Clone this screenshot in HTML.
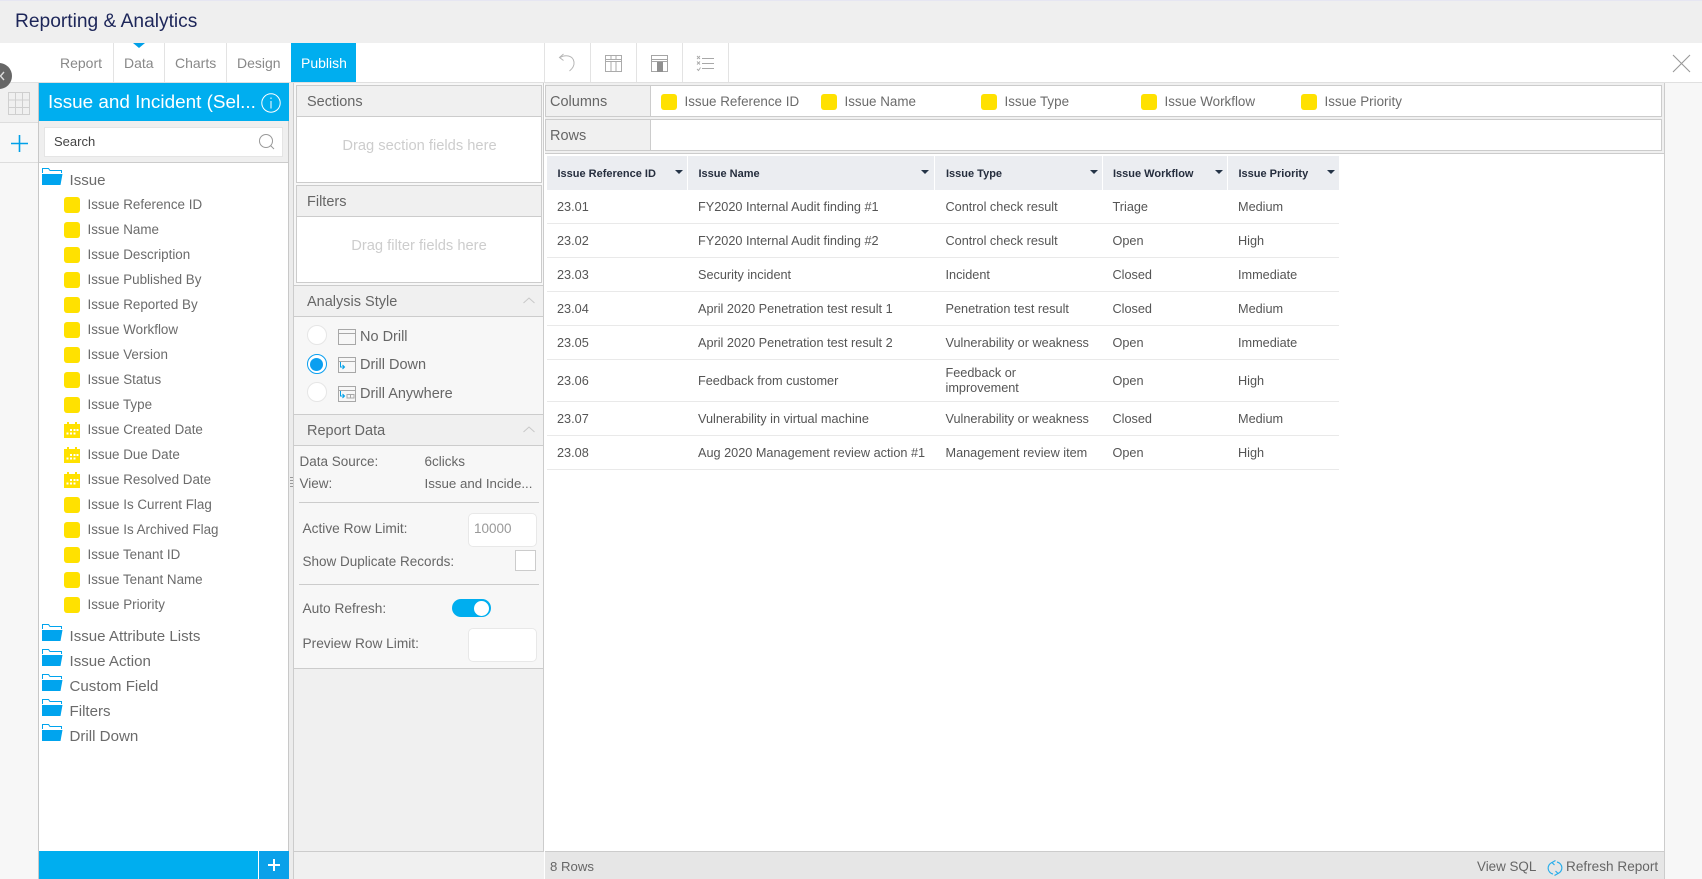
<!DOCTYPE html>
<html><head><meta charset="utf-8"><title>Reporting &amp; Analytics</title>
<style>
html,body{margin:0;padding:0;width:1702px;height:879px;overflow:hidden;background:#f7f7f7;font-family:"Liberation Sans",Arial,sans-serif;color:#666}
.a,.t{position:absolute;box-sizing:border-box}
.t{white-space:nowrap;height:20px;line-height:20px}
svg{position:absolute;overflow:visible}
.tab{font-size:14px;color:#888;top:53px}
.h{font-size:14.5px;color:#666}
.i{font-size:13.4px;left:87.5px;color:#6b6b6b}
.f{font-size:15.1px;left:69.5px;color:#6b6b6b}
.y{position:absolute;left:64px;width:16px;height:16px;background:#ffe100;border-radius:3px}
.y2{position:absolute;width:16px;height:16px;background:#ffe100;border-radius:3px;top:94px}
.c{font-size:13.4px;top:92px;color:#6b6b6b}
.r{font-size:12.7px;color:#555}
.th{font-size:11px;font-weight:bold;color:#262e3e;top:164px}
.hb{position:absolute;top:156px;height:34px;background:#ebedf1}
.ln{position:absolute;left:547px;width:792px;height:1px;background:#e9e9e9}
.ct{position:absolute;top:170px;width:0;height:0;border-left:4px solid transparent;border-right:4px solid transparent;border-top:4.5px solid #253447}
.v{position:absolute;top:43px;width:1px;height:39px;background:#e3e3e3}
.m{font-size:13.5px;color:#666}
.d{font-size:14.5px;color:#666}
.l{font-size:13.7px;color:#666}
.inp{position:absolute;left:468px;width:67px;height:32px;background:#fff;border:1px solid #e8e8e8;border-radius:5px}
.hr{position:absolute;left:299px;width:240px;height:1px;background:#ccc}
</style></head><body>

<!-- top bar -->
<div class="a" style="left:0;top:0;width:1702px;height:43px;background:#efefef;border-top:1px solid #e6e6f2"></div>
<div class="t" style="left:15px;top:11.500px;font-size:19.2px;color:#1d2659">Reporting &amp; Analytics</div>

<!-- tab bar -->
<div class="a" style="left:0;top:43px;width:1702px;height:40px;background:#fff;border-bottom:1px solid #e0e0e0"></div>
<div class="v" style="left:113px"></div><div class="v" style="left:164px"></div><div class="v" style="left:226px"></div>
<div class="a" style="left:291px;top:43px;width:65px;height:39px;background:#00aeef"></div>
<div class="a" style="left:133px;top:43px;width:0;height:0;border-left:6px solid transparent;border-right:6px solid transparent;border-top:5px solid #00a0e8"></div>
<div class="t tab" style="left:60px">Report</div>
<div class="t tab" style="left:124px">Data</div>
<div class="t tab" style="left:175px">Charts</div>
<div class="t tab" style="left:237px">Design</div>
<div class="t tab" style="left:301px;color:#fff">Publish</div>
<div class="v" style="left:544px"></div><div class="v" style="left:590px"></div><div class="v" style="left:636px"></div><div class="v" style="left:682px"></div><div class="v" style="left:728px"></div>

<!-- toolbar icons -->
<svg style="left:558px;top:53px" width="20" height="20" fill="none" stroke="#b5b5b5" stroke-width="1"><path d="M2 4.5 C7 1.5 15 2 16 9 C16.5 13 14 16 11.5 18"/><path d="M5.5 1 L1.5 4.5 L5.5 7.5"/></svg>
<svg style="left:605px;top:55px" width="17" height="17" fill="none" stroke="#ababab"><rect x=".5" y=".5" width="16" height="16"/><path d="M0 4.5H17M0 6.5H17M6 6.5V17M11 6.5V17M6 0V4M11 0V4"/></svg>
<svg style="left:651px;top:55px" width="17" height="17" fill="none" stroke="#a5a5a5"><rect x=".5" y=".5" width="16" height="16"/><path d="M0 4.5H17M0 6.5H17"/><rect x="6" y="7" width="6" height="10" fill="#909090" stroke="none"/></svg>
<svg style="left:696px;top:55px" width="18" height="17" fill="none" stroke="#a8a8a8"><path d="M6 3.5H18M6 8.5H18M6 13.5H18"/><path d="M1 1L4 4M4 1L1 4M1 6.5L4 9.5M4 6.5L1 9.5M1 14L2.5 15.5L4.5 12.5" stroke-width=".9"/></svg>
<svg style="left:1673px;top:55px" width="17" height="17" stroke="#999" stroke-width="1.1"><path d="M0 0L17 17M17 0L0 17"/></svg>

<!-- left rail -->
<div class="a" style="left:0;top:83px;width:38px;height:39px;background:#f0f0f0"></div>
<div class="a" style="left:0;top:122px;width:38px;height:1px;background:#ddd"></div>
<div class="a" style="left:0;top:162px;width:38px;height:1px;background:#ddd"></div>
<svg style="left:8px;top:92px" width="22" height="23" fill="none" stroke="#cfcfcf"><rect x=".5" y=".5" width="21" height="22"/><path d="M7.5 0V23M14.5 0V23M0 8H22M0 15.5H22" /></svg>
<svg style="left:11px;top:135px" width="17" height="17" stroke="#00a0e8" stroke-width="1.6"><path d="M0 8.5H17M8.5 0V17"/></svg>
<div class="a" style="left:-14px;top:63px;width:26px;height:26px;border-radius:50%;background:#666"></div>
<svg style="left:0;top:71px" width="6" height="10" fill="none" stroke="#ddd" stroke-width="1.4"><path d="M4 1L0.5 5L4 9"/></svg>

<!-- field panel -->
<div class="a" style="left:38px;top:83px;width:251px;height:796px;background:#fff;border-left:1px solid #c8c8c8;border-right:1px solid #c8c8c8"></div>
<div class="a" style="left:39px;top:83px;width:250px;height:38px;background:#00aeef"></div>
<div class="t" style="left:48px;top:92.5px;font-size:18.9px;color:#fff">Issue and Incident (Sel...</div>
<svg style="left:261px;top:93px" width="20" height="20" fill="none" stroke="#fff"><circle cx="10" cy="10" r="9.2"/><path d="M10 8V15.5M10 4.5V6"/></svg>
<div class="a" style="left:39px;top:121px;width:249px;height:42px;background:#efefef;border-bottom:1px solid #ccc"></div>
<div class="a" style="left:44px;top:127px;width:239px;height:30px;background:#fff;border:1px solid #e5e5e5"></div>
<div class="t" style="left:54px;top:132px;font-size:13px;color:#444">Search</div>
<svg style="left:259px;top:134px" width="16" height="16" fill="none" stroke="#999"><circle cx="7" cy="7" r="6.5"/><path d="M11.5 11.5L15 15"/></svg>

<svg width="0" height="0" style="position:absolute"><defs>
<g id="fo"><path d="M.5 5V.5H6.5L8 2.5H19.5V5" fill="none" stroke="#00a4ee"/><path d="M0 6H20.5L18.5 17H0Z" fill="#00a4ee"/></g>
<g id="ca"><path d="M0 2H3V0H5V2H11V0H13V2H16V16H0Z" fill="#ffe100"/><path d="M6 7h2v2h-2zM9.500 7h2v2h-2zM12.500 7h2v2h-2zM2.500 10.500h2v2h-2zM6 10.500h2v2h-2zM9.500 10.500h2v2h-2z" fill="#fff"/></g>
</defs></svg>

<svg style="left:42px;top:168px" width="21" height="17"><use href="#fo"/></svg>
<div class="t f" style="top:170.500px">Issue</div>

<div class="y" style="top:197px"></div><div class="t i" style="top:195px">Issue Reference ID</div>
<div class="y" style="top:222px"></div><div class="t i" style="top:220px">Issue Name</div>
<div class="y" style="top:247px"></div><div class="t i" style="top:245px">Issue Description</div>
<div class="y" style="top:272px"></div><div class="t i" style="top:270px">Issue Published By</div>
<div class="y" style="top:297px"></div><div class="t i" style="top:295px">Issue Reported By</div>
<div class="y" style="top:322px"></div><div class="t i" style="top:320px">Issue Workflow</div>
<div class="y" style="top:347px"></div><div class="t i" style="top:345px">Issue Version</div>
<div class="y" style="top:372px"></div><div class="t i" style="top:370px">Issue Status</div>
<div class="y" style="top:397px"></div><div class="t i" style="top:395px">Issue Type</div>
<svg style="left:64px;top:422px" width="16" height="16"><use href="#ca"/></svg><div class="t i" style="top:420px">Issue Created Date</div>
<svg style="left:64px;top:447px" width="16" height="16"><use href="#ca"/></svg><div class="t i" style="top:445px">Issue Due Date</div>
<svg style="left:64px;top:472px" width="16" height="16"><use href="#ca"/></svg><div class="t i" style="top:470px">Issue Resolved Date</div>
<div class="y" style="top:497px"></div><div class="t i" style="top:495px">Issue Is Current Flag</div>
<div class="y" style="top:522px"></div><div class="t i" style="top:520px">Issue Is Archived Flag</div>
<div class="y" style="top:547px"></div><div class="t i" style="top:545px">Issue Tenant ID</div>
<div class="y" style="top:572px"></div><div class="t i" style="top:570px">Issue Tenant Name</div>
<div class="y" style="top:597px"></div><div class="t i" style="top:595px">Issue Priority</div>

<svg style="left:42px;top:624px" width="21" height="17"><use href="#fo"/></svg><div class="t f" style="top:626.500px">Issue Attribute Lists</div>
<svg style="left:42px;top:649px" width="21" height="17"><use href="#fo"/></svg><div class="t f" style="top:651.500px">Issue Action</div>
<svg style="left:42px;top:674px" width="21" height="17"><use href="#fo"/></svg><div class="t f" style="top:676.500px">Custom Field</div>
<svg style="left:42px;top:699px" width="21" height="17"><use href="#fo"/></svg><div class="t f" style="top:701.500px">Filters</div>
<svg style="left:42px;top:724px" width="21" height="17"><use href="#fo"/></svg><div class="t f" style="top:726.500px">Drill Down</div>

<div class="a" style="left:39px;top:851px;width:219px;height:28px;background:#00aeef"></div>
<div class="a" style="left:259px;top:851px;width:30px;height:28px;background:#0aa1ea"></div>
<svg style="left:268px;top:859px" width="12" height="12" stroke="#fff" stroke-width="2"><path d="M0 6H12M6 0V12"/></svg>

<!-- middle panel -->
<div class="a" style="left:289px;top:83px;width:5px;height:796px;background:#ececec;border-right:1px solid #ccc"></div>
<div class="a" style="left:290px;top:477px;width:3px;height:10px;background:repeating-linear-gradient(#999 0 1px,transparent 1px 3px)"></div>
<div class="a" style="left:294px;top:83px;width:250px;height:585px;background:#f7f7f7;border-right:1px solid #ccc"></div>
<div class="a" style="left:294px;top:668px;width:250px;height:183px;background:#f0f0f0;border-top:1px solid #ccc;border-right:1px solid #ccc"></div>
<div class="a" style="left:294px;top:851px;width:251px;height:28px;background:#f0f0f0;border-top:1px solid #ccc;border-right:1px solid #ccc"></div>

<div class="a" style="left:296px;top:85px;width:246px;height:98px;background:#fff;border:1px solid #ccc"></div>
<div class="a" style="left:297px;top:86px;width:244px;height:31px;background:#f0f0f0;border-bottom:1px solid #ccc"></div>
<div class="t h" style="left:307px;top:92px">Sections</div>
<div class="t" style="left:297.500px;width:244px;text-align:center;top:136px;font-size:14.7px;color:#cdcdcd">Drag section fields here</div>

<div class="a" style="left:296px;top:185px;width:246px;height:98px;background:#fff;border:1px solid #ccc"></div>
<div class="a" style="left:297px;top:186px;width:244px;height:31px;background:#f0f0f0;border-bottom:1px solid #ccc"></div>
<div class="t h" style="left:307px;top:192px">Filters</div>
<div class="t" style="left:297px;width:244px;text-align:center;top:235.500px;font-size:14.7px;color:#cdcdcd">Drag filter fields here</div>

<div class="a" style="left:294px;top:285px;width:249px;height:32px;background:#f0f0f0;border-top:1px solid #ccc;border-bottom:1px solid #ccc"></div>
<div class="t h" style="left:307px;top:292px">Analysis Style</div>
<svg style="left:523px;top:297px" width="12" height="7" fill="none" stroke="#c8c8c8"><path d="M.5 6L6 1L11.500 6"/></svg>

<div class="a" style="left:306.500px;top:325px;width:20px;height:20px;border-radius:50%;background:#fff;border:1px solid #e6e6e6"></div>
<div class="a" style="left:306.500px;top:354px;width:20px;height:20px;border-radius:50%;background:#fff;border:1px solid #0a9ff0"></div>
<div class="a" style="left:310px;top:357.500px;width:13px;height:13px;border-radius:50%;background:#0a9ff0"></div>
<div class="a" style="left:306.500px;top:382px;width:20px;height:20px;border-radius:50%;background:#fff;border:1px solid #e6e6e6"></div>
<svg style="left:338px;top:329px" width="18" height="16" fill="none" stroke="#a8a8a8"><rect x=".5" y=".5" width="17" height="15"/><path d="M0 4.500H18"/></svg>
<svg style="left:338px;top:357px" width="18" height="16" fill="none" stroke="#a8a8a8"><rect x=".5" y=".5" width="17" height="15"/><path d="M0 4.500H18"/><path d="M2.500 5V10H6M4.500 8L6.500 10L4.500 12" stroke="#00a0e8"/></svg>
<svg style="left:338px;top:386px" width="18" height="16" fill="none" stroke="#a8a8a8"><rect x=".5" y=".5" width="17" height="15"/><path d="M0 4.500H18"/><path d="M2.500 5V10H6M4.500 8L6.500 10L4.500 12" stroke="#00a0e8"/><rect x="9" y="8.500" width="3.500" height="3.500"/><rect x="12.500" y="8.500" width="3.500" height="3.500"/></svg>
<div class="t d" style="left:360px;top:327px">No Drill</div>
<div class="t d" style="left:360px;top:355px">Drill Down</div>
<div class="t d" style="left:360px;top:384px">Drill Anywhere</div>

<div class="a" style="left:294px;top:414px;width:249px;height:32px;background:#f0f0f0;border-top:1px solid #ccc;border-bottom:1px solid #ccc"></div>
<div class="t h" style="left:307px;top:421px">Report Data</div>
<svg style="left:523px;top:426px" width="12" height="7" fill="none" stroke="#c8c8c8"><path d="M.5 6L6 1L11.500 6"/></svg>

<div class="t m" style="left:299.500px;top:452px">Data Source:</div>
<div class="t m" style="left:424.500px;top:452px">6clicks</div>
<div class="t m" style="left:299.500px;top:474px">View:</div>
<div class="t" style="left:424.500px;top:474px;font-size:13.3px;color:#666">Issue and Incide...</div>
<div class="hr" style="top:502px"></div>
<div class="t l" style="left:302.500px;top:519px">Active Row Limit:</div>
<div class="inp" style="top:513px"></div>
<div class="t" style="left:474px;top:519px;font-size:13.5px;color:#999">10000</div>
<div class="t m" style="left:302.500px;top:552px">Show Duplicate Records:</div>
<div class="a" style="left:515px;top:550px;width:21px;height:21px;background:#fff;border:1px solid #ccc"></div>
<div class="hr" style="top:584px"></div>
<div class="t l" style="left:302.500px;top:599px">Auto Refresh:</div>
<div class="a" style="left:452px;top:599px;width:39px;height:18px;border-radius:9px;background:#00aeef"></div>
<div class="a" style="left:474px;top:601px;width:15px;height:15px;border-radius:50%;background:#fff"></div>
<div class="t l" style="left:302.500px;top:634px">Preview Row Limit:</div>
<div class="inp" style="top:628px"></div>

<!-- right panel -->
<div class="a" style="left:544px;top:83px;width:1121px;height:796px;background:#fff;border-right:1px solid #ccc"></div>
<div class="a" style="left:545px;top:83px;width:1119px;height:71px;background:#f0f0f0;border-bottom:1px solid #ccc"></div>
<div class="a" style="left:545px;top:85px;width:1117px;height:32px;background:#fff;border:1px solid #ccc"></div>
<div class="a" style="left:546px;top:86px;width:105px;height:30px;background:#f0f0f0;border-right:1px solid #ccc"></div>
<div class="a" style="left:545px;top:119px;width:1117px;height:32px;background:#fff;border:1px solid #ccc"></div>
<div class="a" style="left:546px;top:120px;width:105px;height:30px;background:#f0f0f0;border-right:1px solid #ccc"></div>
<div class="t h" style="left:550px;top:92px">Columns</div>
<div class="t h" style="left:550px;top:126px">Rows</div>

<div class="y2" style="left:661px"></div><div class="t c" style="left:684.500px">Issue Reference ID</div>
<div class="y2" style="left:821px"></div><div class="t c" style="left:844.500px">Issue Name</div>
<div class="y2" style="left:981px"></div><div class="t c" style="left:1004.500px">Issue Type</div>
<div class="y2" style="left:1141px"></div><div class="t c" style="left:1164.500px">Issue Workflow</div>
<div class="y2" style="left:1301px"></div><div class="t c" style="left:1324.500px">Issue Priority</div>

<!-- table -->
<div class="hb" style="left:547px;width:140px"></div>
<div class="hb" style="left:688px;width:246px"></div>
<div class="hb" style="left:935px;width:167px"></div>
<div class="hb" style="left:1103px;width:124px"></div>
<div class="hb" style="left:1228px;width:111px"></div>
<div class="t th" style="left:557.500px">Issue Reference ID</div><div class="ct" style="left:674.500px"></div>
<div class="t th" style="left:698.500px">Issue Name</div><div class="ct" style="left:921px"></div>
<div class="t th" style="left:946px">Issue Type</div><div class="ct" style="left:1089.500px"></div>
<div class="t th" style="left:1113px">Issue Workflow</div><div class="ct" style="left:1214.500px"></div>
<div class="t th" style="left:1238.500px">Issue Priority</div><div class="ct" style="left:1326.500px"></div>

<div class="ln" style="top:223px"></div><div class="ln" style="top:257px"></div><div class="ln" style="top:291px"></div><div class="ln" style="top:325px"></div><div class="ln" style="top:359px"></div><div class="ln" style="top:401px"></div><div class="ln" style="top:435px"></div><div class="ln" style="top:469px"></div>

<div class="t r" style="left:557px;top:197px">23.01</div><div class="t r" style="left:698px;top:197px">FY2020 Internal Audit finding #1</div><div class="t r" style="left:945.500px;top:197px">Control check result</div><div class="t r" style="left:1112.500px;top:197px">Triage</div><div class="t r" style="left:1238px;top:197px">Medium</div>
<div class="t r" style="left:557px;top:231px">23.02</div><div class="t r" style="left:698px;top:231px">FY2020 Internal Audit finding #2</div><div class="t r" style="left:945.500px;top:231px">Control check result</div><div class="t r" style="left:1112.500px;top:231px">Open</div><div class="t r" style="left:1238px;top:231px">High</div>
<div class="t r" style="left:557px;top:265px">23.03</div><div class="t r" style="left:698px;top:265px">Security incident</div><div class="t r" style="left:945.500px;top:265px">Incident</div><div class="t r" style="left:1112.500px;top:265px">Closed</div><div class="t r" style="left:1238px;top:265px">Immediate</div>
<div class="t r" style="left:557px;top:299px">23.04</div><div class="t r" style="left:698px;top:299px">April 2020 Penetration test result 1</div><div class="t r" style="left:945.500px;top:299px">Penetration test result</div><div class="t r" style="left:1112.500px;top:299px">Closed</div><div class="t r" style="left:1238px;top:299px">Medium</div>
<div class="t r" style="left:557px;top:333px">23.05</div><div class="t r" style="left:698px;top:333px">April 2020 Penetration test result 2</div><div class="t r" style="left:945.500px;top:333px">Vulnerability or weakness</div><div class="t r" style="left:1112.500px;top:333px">Open</div><div class="t r" style="left:1238px;top:333px">Immediate</div>
<div class="t r" style="left:557px;top:371px">23.06</div><div class="t r" style="left:698px;top:371px">Feedback from customer</div><div class="t r" style="left:945.500px;top:363px">Feedback or</div><div class="t r" style="left:945.500px;top:378px">improvement</div><div class="t r" style="left:1112.500px;top:371px">Open</div><div class="t r" style="left:1238px;top:371px">High</div>
<div class="t r" style="left:557px;top:409px">23.07</div><div class="t r" style="left:698px;top:409px">Vulnerability in virtual machine</div><div class="t r" style="left:945.500px;top:409px">Vulnerability or weakness</div><div class="t r" style="left:1112.500px;top:409px">Closed</div><div class="t r" style="left:1238px;top:409px">Medium</div>
<div class="t r" style="left:557px;top:443px">23.08</div><div class="t r" style="left:698px;top:443px">Aug 2020 Management review action #1</div><div class="t r" style="left:945.500px;top:443px">Management review item</div><div class="t r" style="left:1112.500px;top:443px">Open</div><div class="t r" style="left:1238px;top:443px">High</div>

<!-- status bar -->
<div class="a" style="left:545px;top:851px;width:1119px;height:28px;background:#e6e6e6;border-top:1px solid #ccc"></div>
<div class="t" style="left:550px;top:857px;font-size:13.2px;color:#666">8 Rows</div>
<div class="t" style="left:1477px;top:857px;font-size:13.4px;color:#666">View SQL</div>
<svg style="left:1548px;top:860px" width="14" height="16" fill="none" stroke="#2aaeea" stroke-width="1.200"><path d="M4 2.500A6 6 0 0 0 5 14"/><path d="M10 13.500A6 6 0 0 0 9 2"/><path d="M7.500 0.500L4 2.500L6.500 5M6.500 15.500L10 13.500L7.500 11"/></svg>
<div class="t" style="left:1566px;top:857px;font-size:13.6px;color:#666">Refresh Report</div>
</body></html>
